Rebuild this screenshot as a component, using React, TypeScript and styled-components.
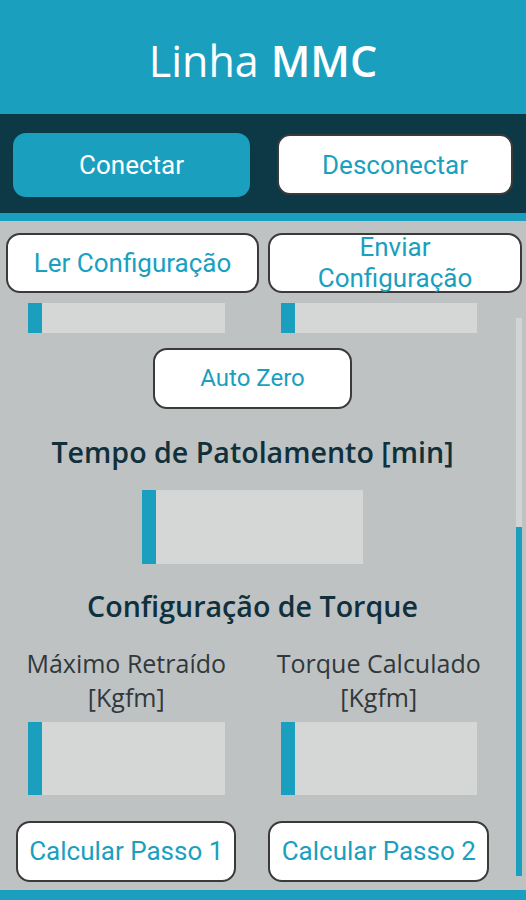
import React from "react";
import styled, { createGlobalStyle } from "styled-components";

const CYAN = "#1b9fbf";
const GRAY = "#bec2c3";

const Global = createGlobalStyle`
  html, body { margin: 0; padding: 0; }
  body { background: ${GRAY}; overflow: hidden; }
  * { box-sizing: border-box; }
`;

const Page = styled.div`
  width: 526px;
  height: 900px;
  display: flex;
  flex-direction: column;
  background: ${GRAY};
`;

const Header = styled.header`
  height: 114px;
  background: ${CYAN};
  display: flex;
  align-items: center;
  justify-content: center;
  padding-top: 7px;
  color: #fff;
  font-family: "Open Sans", sans-serif;
  font-size: 43px;
  font-weight: 400;
`;

const Bold = styled.span`
  font-weight: 600;
  margin-left: 12px;
`;

const ConnectBar = styled.div`
  height: 99px;
  background: #0d3946;
  display: grid;
  grid-template-columns: 237px 236px;
  column-gap: 27px;
  align-items: center;
  padding: 2px 13px 0;
`;

const BaseButton = styled.button`
  font-family: Roboto, sans-serif;
  font-size: 26px;
  cursor: pointer;
  display: flex;
  align-items: center;
  justify-content: center;
  text-align: center;
`;

const ConnectButton = styled(BaseButton)<{ $primary?: boolean }>`
  height: ${(p) => (p.$primary ? 64 : 61)}px;
  border-radius: 13px;
  background: ${(p) => (p.$primary ? CYAN : "#fff")};
  color: ${(p) => (p.$primary ? "#fff" : CYAN)};
  border: ${(p) => (p.$primary ? "none" : "2px solid #3a3a3a")};
`;

const Divider = styled.div`
  height: 8px;
  background: ${CYAN};
`;

const Content = styled.div`
  flex: 1;
  position: relative;
  display: flex;
  flex-direction: column;
`;

const TopRow = styled.div`
  display: grid;
  grid-template-columns: 253px 254px;
  column-gap: 9px;
  padding: 12px 4px 0 6px;
`;

const OutlineButton = styled(BaseButton)<{ $w?: number; $h?: number; $size?: number }>`
  height: ${(p) => p.$h ?? 60}px;
  width: ${(p) => (p.$w ? `${p.$w}px` : "auto")};
  background: #fff;
  color: ${CYAN};
  border: 2px solid #3a3a3a;
  border-radius: 14px;
  font-size: ${(p) => p.$size ?? 26}px;
  line-height: 31px;
  padding: 0;
`;

const Main = styled.div`
  width: 505px;
  display: flex;
  flex-direction: column;
  align-items: center;
  padding-top: 10px;
`;

const TwoCols = styled.div<{ $mt?: number }>`
  width: 100%;
  display: grid;
  grid-template-columns: 1fr 1fr;
  justify-items: center;
  margin-top: ${(p) => p.$mt ?? 0}px;
`;

const Bar = styled.div<{ $w: number; $h: number; $mt?: number }>`
  width: ${(p) => p.$w}px;
  height: ${(p) => p.$h}px;
  margin-top: ${(p) => p.$mt ?? 0}px;
  background: #d5d6d6;
  border-left: 14px solid ${CYAN};
`;

const Spaced = styled.div<{ $mt: number }>`
  margin-top: ${(p) => p.$mt}px;
`;

const SectionTitle = styled.h2<{ $mt: number }>`
  margin: ${(p) => p.$mt}px 0 0;
  font-family: "Open Sans", sans-serif;
  font-size: 28.6px;
  font-weight: 600;
  line-height: 40px;
  color: #10303b;
  text-align: center;
`;

const Label = styled.div`
  font-family: "Open Sans", sans-serif;
  font-size: 25px;
  line-height: 34px;
  color: #30383b;
  text-align: center;
`;

const ScrollTrack = styled.div`
  position: absolute;
  left: 516px;
  top: 97px;
  width: 6px;
  height: 558px;
  background: #d0d4d5;
  display: flex;
  flex-direction: column;
  justify-content: flex-end;
`;

const ScrollThumb = styled.div`
  height: 349px;
  background: ${CYAN};
`;

const BottomLine = styled.div`
  height: 10px;
  background: ${CYAN};
`;

export default function App() {
  return (
    <Page>
      <Global />
      <Header>
        Linha<Bold>MMC</Bold>
      </Header>
      <ConnectBar>
        <ConnectButton $primary>Conectar</ConnectButton>
        <ConnectButton>Desconectar</ConnectButton>
      </ConnectBar>
      <Divider />
      <Content>
        <TopRow>
          <OutlineButton>Ler Configuração</OutlineButton>
          <OutlineButton>
            Enviar
            <br />
            Configuração
          </OutlineButton>
        </TopRow>
        <Main>
          <TwoCols>
            <Bar $w={197} $h={30} />
            <Bar $w={196} $h={30} />
          </TwoCols>
          <Spaced $mt={15}>
            <OutlineButton $w={199} $h={61} $size={24}>
              Auto Zero
            </OutlineButton>
          </Spaced>
          <SectionTitle $mt={23}>Tempo de Patolamento [min]</SectionTitle>
          <Bar $w={221} $h={74} $mt={18} />
          <SectionTitle $mt={22}>Configuração de Torque</SectionTitle>
          <TwoCols $mt={20}>
            <Label>
              Máximo Retraído
              <br />
              [Kgfm]
            </Label>
            <Label>
              Torque Calculado
              <br />
              [Kgfm]
            </Label>
          </TwoCols>
          <TwoCols $mt={8}>
            <Bar $w={197} $h={73} />
            <Bar $w={196} $h={73} />
          </TwoCols>
          <TwoCols $mt={26}>
            <OutlineButton $w={220} $h={61} $size={26}>
              Calcular Passo 1
            </OutlineButton>
            <OutlineButton $w={221} $h={61} $size={26}>
              Calcular Passo 2
            </OutlineButton>
          </TwoCols>
        </Main>
        <ScrollTrack>
          <ScrollThumb />
        </ScrollTrack>
      </Content>
      <BottomLine />
    </Page>
  );
}
